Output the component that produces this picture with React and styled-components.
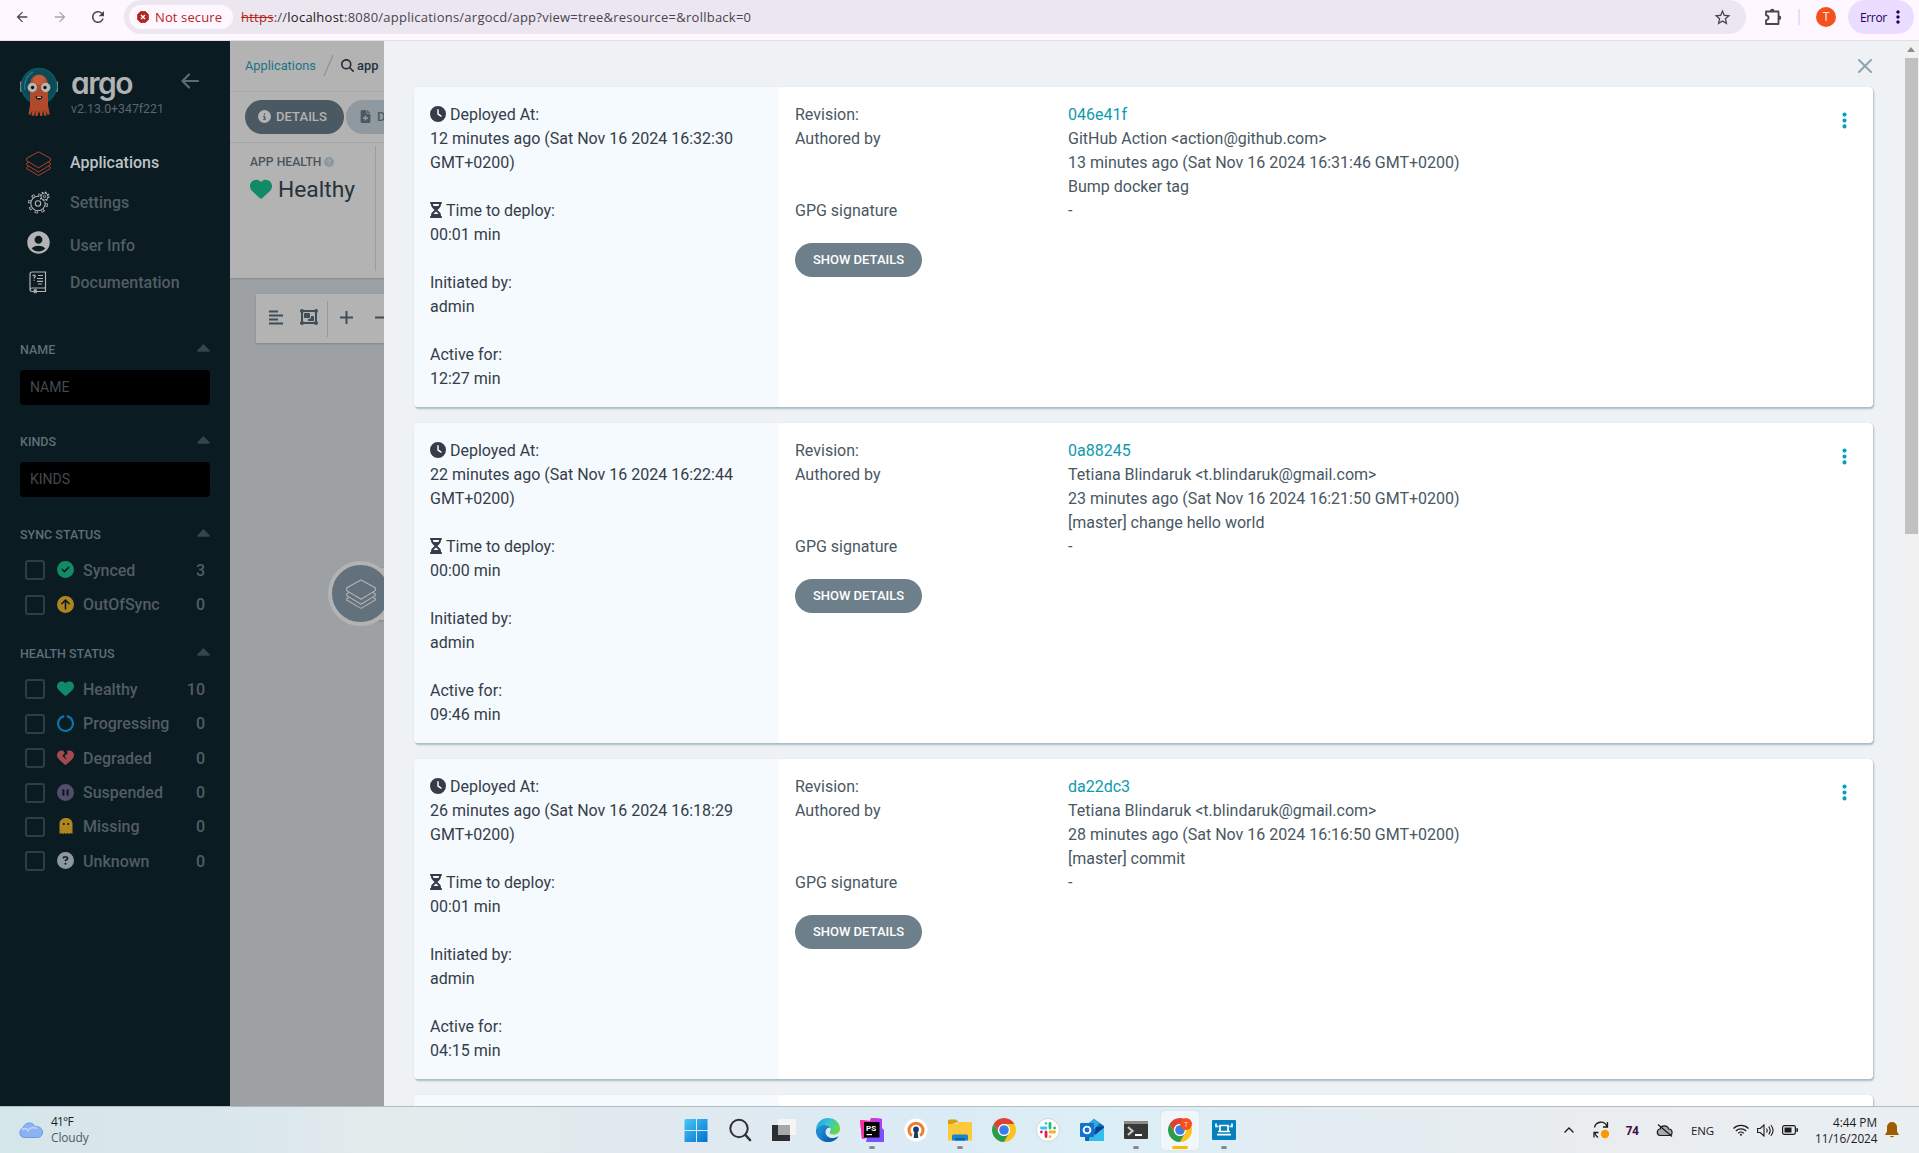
import React from 'react';
import styled, { createGlobalStyle } from 'styled-components';
import {
  FaClock, FaHourglassHalf, FaHeart, FaHeartCrack, FaCircleCheck, FaCircleArrowUp, FaCirclePause,
  FaCircleQuestion, FaCircleInfo, FaFileMedical, FaMagnifyingGlass, FaObjectGroup,
  FaCircleNotch, FaEllipsisVertical,
} from 'react-icons/fa6';
import { MdAccountCircle, MdArrowBack, MdArrowForward, MdRefresh, MdStarBorder, MdMoreVert } from 'react-icons/md';

const Global = createGlobalStyle`
  * { box-sizing: border-box; }
  body { margin: 0; overflow: hidden; font-family: Roboto, "Liberation Sans", sans-serif; }
  svg { display: block; flex: none; }
`;

const Screen = styled.div`
  width: 1919px;
  height: 1153px;
  display: flex;
  flex-direction: column;
  overflow: hidden;
`;

/* ---------- browser bar ---------- */
const BrowserBar = styled.header`
  height: 41px;
  flex: none;
  display: flex;
  align-items: flex-start;
  background: #fef7ff;
  border-bottom: 1px solid #e7dbe9;
  font-family: "Open Sans", "Noto Sans", sans-serif;
`;
const BarButton = styled.div`
  width: ${(p) => p.$w}px;
  height: 34px;
  display: flex;
  align-items: center;
  padding-left: ${(p) => p.$pad || 0}px;
  color: ${(p) => p.$color || '#4a4452'};
`;
const AddressBar = styled.div`
  width: 1622px;
  height: 34px;
  border-radius: 17px;
  background: #ece6f0;
  display: flex;
  align-items: center;
  padding: 0 14px 0 5px;
  color: #49454e;
`;
const SecurityChip = styled.div`
  width: 104px;
  height: 24px;
  border-radius: 12px;
  background: #fef7ff;
  display: flex;
  align-items: center;
  gap: 6px;
  padding-left: 8px;
  color: #b3261e;
  font-size: 13px;
  letter-spacing: 0.12px;
  white-space: nowrap;
`;
const Url = styled.div`
  flex: 1;
  padding-left: 8px;
  font-size: 13px;
  letter-spacing: 0.245px;
  white-space: nowrap;
  s { color: #b3261e; }
  b { color: #1d1b20; font-weight: 400; }
`;
const BarDivider = styled.div`
  width: 2px;
  height: 16px;
  margin: 9px 16px 0 16px;
  background: #eaddff;
`;
const Avatar = styled.div`
  width: 20px;
  height: 20px;
  border-radius: 50%;
  margin: 7px 12px 0 0;
  background: #f4511e;
  color: #fde3da;
  font: 12px/20px Roboto, sans-serif;
  text-align: center;
`;
const ErrorChip = styled.div`
  width: 66px;
  height: 34px;
  border-radius: 17px;
  background: #eaddff;
  color: #21005d;
  display: flex;
  align-items: center;
  padding-left: 12px;
  gap: 1px;
  font-size: 12px;
  letter-spacing: -0.35px;
`;

/* ---------- page ---------- */
const Page = styled.div`
  flex: 1;
  min-height: 0;
  display: flex;
  overflow: hidden;
`;
const Sidebar = styled.nav`
  width: 230px;
  flex: none;
  background: #0a1b22;
  color: #525d63;
  padding-top: 26px;
`;
const Brand = styled.div`
  height: 76px;
  padding-left: 19px;
  display: flex;
  gap: 12px;
`;
const BrandText = styled.div`
  width: 98px;
  display: flex;
  flex-direction: column;
  white-space: nowrap;
`;
const Wordmark = styled.div`
  height: 35px;
  font: 600 30px/32px Inter, "Open Sans", sans-serif;
  font-feature-settings: "cv11";
  letter-spacing: -1.5px;
  color: #b1b3b3;
`;
const Version = styled.div`
  font-size: 12.3px;
  line-height: 14px;
  color: #5a666c;
`;
const Collapse = styled.div`
  padding: 6px 0 0;
  color: #5f6a70;
`;
const NavItem = styled.div`
  height: ${(p) => p.$h}px;
  padding-left: 26px;
  display: flex;
  align-items: center;
  gap: 20px;
  font-size: 16px;
  font-weight: 500;
  color: ${(p) => (p.$active ? '#bfc3c4' : '#525d63')};
  span { padding: ${(p) => p.$drop || 0}px 0 ${(p) => (p.$active ? 2 : 0)}px; }
`;
const NavIcon = styled.div`
  width: 24px;
  display: flex;
  justify-content: center;
  color: #b3b3b3;
`;
const Filter = styled.section`
  padding: 0 20px;
  margin-top: ${(p) => p.$top}px;
`;
const FilterTitle = styled.div`
  height: 20px;
  display: flex;
  align-items: center;
  justify-content: space-between;
  margin-bottom: ${(p) => p.$gap}px;
  font-size: 12.5px;
  font-weight: 500;
  color: #5e7079;
  svg { margin-top: -3px; }
`;
const FilterInput = styled.div`
  height: 35px;
  border-radius: 4px;
  background: #000;
  padding-left: 10px;
  font-size: 14px;
  line-height: 35px;
  color: #42494f;
`;
const CheckRow = styled.div`
  height: 34.4px;
  display: flex;
  align-items: center;
  padding: 0 5px;
  font-size: 16px;
  font-weight: 500;
  color: #525d63;
  span { flex: 1; }
`;
const Box = styled.div`
  width: 20px;
  height: 20px;
  border: 2px solid #313d46;
  border-radius: 3px;
  margin-right: 12px;
`;
const StatusIcon = styled.div`
  width: 17px;
  margin: -1px 9px 0 0;
  display: flex;
  justify-content: center;
  color: ${(p) => p.$color};
`;

const Main = styled.main`
  width: 154px;
  flex: none;
  overflow: hidden;
  background: #9da1a4;
  white-space: nowrap;
`;
const Crumbs = styled.div`
  height: 51px;
  background: #b3b3b3;
  border-bottom: 1px solid #a6a8aa;
  padding: 0 0 2px 15px;
  display: flex;
  align-items: center;
  font-size: 12.8px;
  color: #1c7383;
  b { font-weight: 500; color: #26303a; }
`;
const Actions = styled.div`
  height: 51px;
  background: #b3b3b3;
  border-bottom: 1px solid #a6a8aa;
  padding: 8px 0 0 15px;
  display: flex;
  gap: 2px;
`;
const Pill = styled.div`
  width: 99px;
  height: 34px;
  flex: none;
  border-radius: 17px;
  background: ${(p) => p.$bg};
  color: ${(p) => p.$fg};
  display: flex;
  align-items: center;
  padding: 0 0 1px 13px;
  gap: 5px;
  font-size: 13.1px;
  font-weight: 500;
`;
const Status = styled.div`
  height: 135px;
  background: #b3b3b3;
  box-shadow: 0 1px 2px #81898f;
  padding: 3px 0 7px 20px;
  display: flex;
`;
const Health = styled.div`
  width: 126px;
  border-right: 1px solid #9a9da0;
  padding-top: 8px;
`;
const HealthLabel = styled.div`
  display: flex;
  align-items: center;
  gap: 3px;
  height: 16px;
  font-size: 12.2px;
  font-weight: 500;
  color: #49555e;
  svg { color: #8c979e; }
`;
const HealthValue = styled.div`
  display: flex;
  align-items: center;
  gap: 6px;
  height: 38px;
  font-size: 22.8px;
  color: #28323b;
  svg { color: #108a67; }
`;
const GraphBar = styled.div`
  height: 49px;
  margin: 16px 0 0 26px;
  background: #b3b3b3;
  box-shadow: 0 1px 2px #7c858b;
  display: flex;
  align-items: center;
  color: #404e58;
`;
const GraphGroup = styled.div`
  width: 72px;
  height: 36px;
  flex: none;
  display: flex;
  align-items: center;
  gap: ${(p) => (p.$last ? 22 : 17)}px;
  padding: 0 0 3px ${(p) => (p.$last ? 12 : 13)}px;
  border-right: ${(p) => (p.$last ? '0' : '1px solid #979a9c')};
`;
const Node = styled.div`
  margin: 218px 0 0 98px;
  display: flex;
  align-items: center;
  isolation: isolate;
`;
const NodeCircle = styled.div`
  width: 65px;
  height: 65px;
  flex: none;
  border-radius: 50%;
  border: 4px solid #b3b3b3;
  background: #62717b;
  display: flex;
  align-items: center;
  justify-content: center;
  color: #b3b3b3;
`;
const NodeCard = styled.div`
  width: 60px;
  height: 52px;
  flex: none;
  margin: 0 0 0 -20px;
  background: #b3b3b3;
  box-shadow: 0 1px 2px #7c858b;
  z-index: -1;
`;

/* ---------- history panel ---------- */
const Panel = styled.div`
  flex: 1;
  display: flex;
  background: #eef2f5;
  overflow: hidden;
`;
const PanelBody = styled.div`
  width: 1519px;
  padding: 0 30px 0 30px;
`;
const PanelTop = styled.div`
  height: 46px;
  display: flex;
  justify-content: flex-end;
  align-items: flex-start;
  padding: 18px 1px 0 0;
`;
const Card = styled.article`
  height: 320px;
  margin-bottom: 16px;
  display: flex;
  border-radius: 4px;
  overflow: hidden;
  background: #fff;
  box-shadow: 0 0 1px #b9c6ce, 1px 2px 2px #a9bac4;
  font-size: 16px;
  line-height: 24px;
`;
const Deployed = styled.div`
  width: 365px;
  flex: none;
  background: #f4fafd;
  padding: 16px;
  color: #363c4a;
  display: flex;
  flex-direction: column;
  gap: 24px;
  white-space: nowrap;
`;
const IconLine = styled.div`
  display: flex;
  align-items: center;
  gap: 4px;
  svg {
    width: ${(p) => p.$icon}px;
    height: 16px;
    margin-top: -2px;
  }
`;
const Revision = styled.div`
  flex: 1;
  padding: 16px;
  color: #495763;
`;
const Fields = styled.div`
  display: grid;
  grid-template-columns: 273px 1fr;
  margin-bottom: 20px;
`;
const Link = styled.a`
  color: #0e9aae;
`;
const DetailsButton = styled.button`
  width: 127px;
  height: 34px;
  border: 0;
  padding: 0;
  border-radius: 17px;
  background: #6d7f8b;
  color: #fff;
  font: 500 13px/34px Roboto, sans-serif;
`;
const Kebab = styled.div`
  width: 56px;
  padding: 24px 0 0 18px;
  color: #00a2b3;
`;
const ScrollTrack = styled.div`
  width: 16px;
  background: #f1f1f1;
  display: flex;
  flex-direction: column;
  align-items: center;
  padding-top: 6px;
`;
const ScrollThumb = styled.div`
  width: 13px;
  height: 476px;
  margin-top: 6px;
  background: #c1c1c1;
`;

/* ---------- taskbar ---------- */
const Taskbar = styled.footer`
  height: 47px;
  flex: none;
  display: grid;
  grid-template-columns: 674px 572px 1fr;
  border-top: 1px solid #b4bcc1;
  background: linear-gradient(90deg, #d5e6ea 0%, #dae7ed 13%, #e4ebec 20%, #e0e9f0 37%, #dbebf5 48%, #dceef6 58%, #e2ecf2 68%, #e9edf0 82%, #e9eef2 100%);
  font-family: "Open Sans", "Noto Sans", sans-serif;
`;
const Weather = styled.div`
  display: flex;
  align-items: center;
  padding-left: 18px;
  gap: 8px;
  font-size: 12px;
  line-height: 16px;
  letter-spacing: -0.8px;
  color: #1b1f22;
  small { display: block; font-size: 12px; letter-spacing: -0.15px; color: #545c61; }
`;
const Apps = styled.div`
  display: flex;
`;
const AppSlot = styled.div`
  width: 44px;
  height: 46px;
  display: flex;
  flex-direction: column;
  align-items: center;
  padding: 4px 3px 2px;
`;
const Tile = styled.div`
  width: 38px;
  height: 39px;
  border-radius: 4px;
  display: flex;
  flex-direction: column;
  align-items: center;
  padding-top: 7px;
  background: ${(p) => (p.$active ? '#f1f6fa' : 'transparent')};
  box-shadow: ${(p) => (p.$active ? '0 0 1px #b8c6cf' : 'none')};
`;
const Mark = styled.div`
  width: ${(p) => (p.$active ? 16 : 6)}px;
  height: 3px;
  margin-top: 4px;
  border-radius: 2px;
  background: ${(p) => (p.$active ? '#fdb900' : '#858c90')};
`;
const Tray = styled.div`
  display: flex;
  align-items: center;
  justify-content: flex-end;
  padding-right: 20px;
  font-size: 11.5px;
  color: #1b1b1b;
`;
const TrayItem = styled.div`
  margin-right: ${(p) => p.$r}px;
  white-space: nowrap;
  color: ${(p) => p.$color || 'inherit'};
  font-weight: ${(p) => (p.$bold ? 700 : 400)};
  letter-spacing: ${(p) => p.$ls || 0}px;
`;
const Clock = styled.div`
  margin-right: 8px;
  width: 62px;
  text-align: right;
  white-space: nowrap;
  line-height: 16px;
  font-size: 11.8px;
`;

/* ---------- drawings ---------- */
const Layers = ({ size, color, sw }) => (
  <svg width={size} height={size} viewBox="0 0 24 24" fill="none" stroke={color} strokeWidth={sw} strokeLinejoin="round">
    <path d="M12 .8 23.4 7v2.3L12 16.2.6 9.300V7z" />
    <path d="M2.500 10.800.6 12v1.300L12 20.200l11.400-6.900V12l-1.900-1.200" />
    <path d="M2.500 14.600.6 15.800v1L12 23.500l11.400-6.700v-1l-1.900-1.200" />
  </svg>
);

const Gears = () => (
  <svg width="23" height="23" viewBox="0 0 23 23" fill="none" stroke="currentColor">
    <circle cx="11" cy="12.500" r="8.900" strokeWidth="2.400" strokeDasharray="3.300 3.690" />
    <circle cx="11" cy="12.500" r="8.400" stroke="#0a1b22" strokeWidth="1.700" strokeDasharray="1.500 5.100" strokeDashoffset="-.9" />
    <circle cx="11" cy="12.500" r="7.200" strokeWidth="1.100" />
    <circle cx="11" cy="12.500" r="2.700" strokeWidth="1.100" />
    <circle cx="17.500" cy="5.500" r="4.900" fill="#0a1b22" stroke="#0a1b22" />
    <circle cx="17.500" cy="5.500" r="3.500" strokeWidth="1" />
    <circle cx="17.500" cy="5.500" r="4.400" strokeWidth="1.200" strokeDasharray="1.600 1.860" />
    <circle cx="17.500" cy="5.500" r="1.200" strokeWidth=".9" />
  </svg>
);

const Book = () => (
  <svg width="18" height="23" viewBox="0 0 18 23" fill="none" stroke="currentColor" strokeWidth="1.200">
    <path d="M3 1h13.500v19.500H3a2 2 0 0 1-2-2V3a2 2 0 0 1 2-2zM1.200 18.500Q1.500 17 3 17h13.500" />
    <path d="M9 4.500h5M8 7.500h6M8 10.300h6M9 13h4" />
    <path d="M4 5.200c0-1.600 2.300-1.500 2.300 0 0 1-1.200 1.100-1.200 2.300M5.100 8.800v1" />
    <path d="M5 18.500v3.800l1.200-1 1.300 1v-3.800z" fill="currentColor" strokeWidth=".5" />
  </svg>
);

const Squid = () => (
  <svg width="40" height="50" viewBox="0 0 40 50">
    <rect x="1" y="14" width="38" height="11" rx="1.500" fill="#7d8f9b" />
    <circle cx="20" cy="19" r="18.300" fill="#0b5560" />
    <circle cx="20" cy="19" r="16.300" fill="#0c4b55" />
    <path d="M6 23C4.500 15 8 8 14 5" fill="none" stroke="#2f7580" strokeWidth="1.200" />
    <path d="M11 17a9 9.500 0 0 1 18 0v21l1.800 9.500h-2.600l-1.400-4 .6 5.300h-2.200L24 43l-.7 6h-2.100L20 43.500 18.600 49h-2.200l.2-6-1.500 5.800h-2.500l.8-5.800-1.700 4.500H9.500L11 38z" fill="#b1492c" />
    <ellipse cx="20" cy="13" rx="6" ry="5" fill="#c05b3b" />
    <circle cx="13.300" cy="20.500" r="4.700" fill="#b5b7b7" />
    <circle cx="26.700" cy="20.500" r="4.700" fill="#b5b7b7" />
    <circle cx="13.600" cy="20.500" r="1.700" fill="#111" />
    <circle cx="26" cy="20.500" r="1.700" fill="#111" />
    <path d="M16.500 29c2 1 5 1 7 0-.5 5-6.500 5-7 0z" fill="#111" />
    <path d="M18 29.700h4v1.300h-4z" fill="#bbb" />
  </svg>
);

const Ghost = () => (
  <svg width="14" height="16" viewBox="0 0 14 16">
    <path d="M.5 16V6c0-8 13-8 13 0v10l-1.500-1L10.300 16l-1.800-1L7 16l-1.500-1L3.800 16 2 15zM4 5v2h1.600V5zM8.400 5v2H10V5z" fill="currentColor" fillRule="evenodd" />
  </svg>
);

const Caret = () => (
  <svg width="13" height="8" viewBox="0 0 13 8"><path d="M6.500 0 12.800 6.500q.2 1.300-1 1.300H1.200Q0 7.800.2 6.500z" fill="#38434b" /></svg>
);

const Puzzle = () => (
  <svg width="18" height="18" viewBox="0 0 18 18">
    <path d="M2 3.500h12.500v12.500H2v-3.700q2.600-.7 2.600-2.500T2 7.200z" fill="none" stroke="currentColor" strokeWidth="1.800" strokeLinejoin="round" />
    <path d="M6 3a2.200 2.200 0 0 1 4.400 0zM15 7.500a2.200 2.200 0 0 1 0 4.400z" fill="currentColor" />
  </svg>
);

const Chrome = ({ badge }) => (
  <svg width="24" height="24" viewBox="0 0 24 24">
    <path d="M12 6h10.390A12 12 0 0 0 1.610 6L6.800 15A6 6 0 0 1 12 6z" fill="#e0402f" />
    <path d="M12 6h10.390A12 12 0 0 0 1.610 6L6.800 15A6 6 0 0 1 12 6z" fill="#fcc31e" transform="rotate(120 12 12)" />
    <path d="M12 6h10.390A12 12 0 0 0 1.610 6L6.800 15A6 6 0 0 1 12 6z" fill="#2c9c48" transform="rotate(240 12 12)" />
    <circle cx="12" cy="12" r="6" fill="#fff" />
    <circle cx="12" cy="12" r="4.800" fill="#3a7de8" />
    {badge && <circle cx="18" cy="6" r="6" fill="#f4511e" />}
    {badge && <text x="18" y="8.500" fontSize="7" fill="#fbd5c8" textAnchor="middle" fontFamily="Roboto">T</text>}
  </svg>
);

const Windows = () => (
  <svg width="24" height="24" viewBox="0 0 24 24">
    <defs><linearGradient id="win" x1="0" y1="0" x2="1" y2="1"><stop offset="0" stopColor="#48c8f8" /><stop offset="1" stopColor="#0071cf" /></linearGradient></defs>
    <path d="M1.500 1H12v11H.5V2zM13 1h10.500v11H13zM.5 13H12v11H.5zM13 13h10.500v11H13z" fill="url(#win)" />
  </svg>
);
const SearchGlyph = () => (
  <svg width="24" height="24" viewBox="0 0 24 24" fill="none" stroke="#2f3133" strokeLinecap="round">
    <circle cx="11" cy="10.500" r="8.700" strokeWidth="2" fill="#dfe7ec" /><path d="m17.500 17 4.500 5" strokeWidth="2.600" />
  </svg>
);
const TaskView = () => (
  <svg width="24" height="24" viewBox="0 0 24 24">
    <path d="M0 7h18v16H0z" fill="#2c2d2e" /><path d="M6 1h18v16H6z" fill="#f5f5f5" /><path d="M6 7h12v10H6z" fill="#a6a8aa" />
  </svg>
);
const Edge = () => (
  <svg width="24" height="24" viewBox="0 0 24 24">
    <defs>
      <linearGradient id="edgeTop" x1="0" y1="0" x2="1" y2=".4"><stop offset="0" stopColor="#1f9be0" /><stop offset=".5" stopColor="#35c1d8" /><stop offset="1" stopColor="#62d84e" /></linearGradient>
      <linearGradient id="edgeLow" x1="0" y1="0" x2="1" y2="1"><stop offset="0" stopColor="#1b9fe0" /><stop offset="1" stopColor="#0c4c9c" /></linearGradient>
    </defs>
    <path d="M0 11C1 4 6 0 12 0c7 0 12 5 12 10.500 0 4-3 6-6.500 6-2.500 0-4-1-4-2 0-.8 1.200-1.300 1.200-3C14.700 9 12 7 8.500 7 4.500 7 1.500 8.500 0 11z" fill="url(#edgeTop)" />
    <path d="M0 12C1 9 4.500 7 8.500 7c2.500 0 5 1 5.800 3C12 9 9.500 11 9.500 14c0 4 4 6.500 8 6 2-.3 3.500-1 5-2C20.500 22 16.500 24 12 24 5 24-.5 18.500 0 12z" fill="url(#edgeLow)" />
    <path d="M8.500 7C4 7 .5 9 0 12c-.3 5 3 10 8 11.500C4 20 4 12 8.500 7z" fill="#1d8fd8" opacity=".6" />
  </svg>
);
const PhpStorm = () => (
  <svg width="24" height="24" viewBox="0 0 24 24">
    <path d="m0 2 10 1 1-3 11 1v9l2 2v12H6l1-4-5 1z" fill="#7b52ff" /><path d="m0 2 10 1 1-3 11 1-1 9H7v8l-5 3z" fill="#ff2d9a" /><path d="m12 0 10 1v8h-9z" fill="#b83bf0" />
    <path d="M4 4h15.500v15.500H4z" fill="#000" />
    <text x="6" y="12.500" fontSize="8" fontWeight="700" fontFamily="Roboto" fill="#fff">PS</text>
    <path d="M6.500 16h5.500v1.200H6.500z" fill="#fff" />
  </svg>
);
const Vpn = () => (
  <svg width="24" height="24" viewBox="0 0 24 24">
    <circle cx="12" cy="12" r="11.500" fill="#fff" />
    <path d="M7.800 17.800a7 7 0 1 1 8.400 0" fill="none" stroke="#ea7e2a" strokeWidth="3" />
    <circle cx="12" cy="11.500" r="2.900" fill="#1b3a6b" /><path d="M10.500 12h3l.8 8H9.700z" fill="#1b3a6b" />
  </svg>
);
const Folder = () => (
  <svg width="24" height="24" viewBox="0 0 24 24">
    <path d="M0 3q0-1.500 1.500-1.500H8l3 3h-3L0 8z" fill="#dc9c0f" /><path d="M0 6h9l2.500-2H24v18.500H0z" fill="#fcc93b" />
    <path d="M4 22.500V18q0-1.500 1.500-1.500h13q1.500 0 1.500 1.500v4.500z" fill="#1485d0" /><path d="M7 20h10v2.500H7z" fill="#0b62a8" />
  </svg>
);
const Slack = () => (
  <svg width="24" height="24" viewBox="0 0 24 24" strokeWidth="2.800" strokeLinecap="round">
    <circle cx="12" cy="12" r="11.500" fill="#fff" stroke="#cfd4d6" strokeWidth="1" />
    <path d="M10 5.400v.01M5.400 10H10" stroke="#36c5f0" /><path d="M14 5.400V10M18.600 10v.01" stroke="#2eb67d" />
    <path d="M14 14h4.600M14 18.600v.01" stroke="#ecb22e" /><path d="M10 14v4.600M5.400 14v.01" stroke="#e01e5a" />
  </svg>
);
const Outlook = () => (
  <svg width="24" height="24" viewBox="0 0 24 24">
    <path d="M5 8 14 1l10 7v14q0 1-1 1H6q-1 0-1-1z" fill="#1066b5" /><path d="m8 6 6-5 6 4-8 9z" fill="#32a8e0" /><path d="m24 10-15 10v3h14q1 0 1-1z" fill="#35bdf0" /><path d="M16 9h8l-9 8z" fill="#0c3f85" />
    <rect y="5" width="14" height="14" rx="1" fill="#1273cf" /><circle cx="7" cy="12" r="3.400" fill="none" stroke="#fff" strokeWidth="1.900" />
  </svg>
);
const Terminal = () => (
  <svg width="24" height="24" viewBox="0 0 24 24">
    <rect y="3" width="24" height="18" rx="1" fill="#383838" /><path d="M0 3h24v3H0z" fill="#8a8a8a" />
    <path d="m4 9 4.500 4L4 17" fill="none" stroke="#c8c8c8" strokeWidth="2.200" /><path d="M11 16h7v2h-7z" fill="#fff" />
  </svg>
);
const Phone = () => (
  <svg width="24" height="24" viewBox="0 0 24 24">
    <rect y="2" width="24" height="20" rx="1" fill="#0380bd" />
    <path d="M4 5.500v3h2.500M20 5.500v3h-2.500M8 13.500V7.500h8v6zM5 16.700h14M6 13.500h12" fill="none" stroke="#fff" strokeWidth="1.700" />
  </svg>
);
const Cloud = () => (
  <svg width="25" height="17" viewBox="0 0 25 17">
    <path d="M5.500 15.500a5 5 0 0 1-.5-9.500C6.500 0 14.500-1 17 4.500c4-.5 7.500 2 7.500 5.700 0 3-2 5.300-5 5.300z" fill="#8cb2f2" stroke="#6f98e4" />
    <path d="M4 7.500c3-1.500 5-.5 6 1 2-3 6-4 9-2" fill="none" stroke="#b8d2fb" strokeWidth="2" />
  </svg>
);

const apps = [
  [Windows], [SearchGlyph], [TaskView], [Edge], [PhpStorm, true], [Vpn], [Folder, true],
  [Chrome], [Slack], [Outlook], [Terminal, true], [() => <Chrome badge />, true, true], [Phone, true],
];

const deployments = [
  { at: ['12 minutes ago (Sat Nov 16 2024 16:32:30', 'GMT+0200)'], took: '00:01 min', active: '12:27 min', rev: '046e41f', author: 'GitHub Action <action@github.com>', when: '13 minutes ago (Sat Nov 16 2024 16:31:46 GMT+0200)', msg: 'Bump docker tag' },
  { at: ['22 minutes ago (Sat Nov 16 2024 16:22:44', 'GMT+0200)'], took: '00:00 min', active: '09:46 min', rev: '0a88245', author: 'Tetiana Blindaruk <t.blindaruk@gmail.com>', when: '23 minutes ago (Sat Nov 16 2024 16:21:50 GMT+0200)', msg: '[master] change hello world' },
  { at: ['26 minutes ago (Sat Nov 16 2024 16:18:29', 'GMT+0200)'], took: '00:01 min', active: '04:15 min', rev: 'da22dc3', author: 'Tetiana Blindaruk <t.blindaruk@gmail.com>', when: '28 minutes ago (Sat Nov 16 2024 16:16:50 GMT+0200)', msg: '[master] commit' },
];

const syncRows = [
  ['Synced', 3, <FaCircleCheck size={17} />, '#128a68'],
  ['OutOfSync', 0, <FaCircleArrowUp size={17} />, '#ae861d'],
];
const healthRows = [
  ['Healthy', 10, <FaHeart size={17} />, '#128a68'],
  ['Progressing', 0, <FaCircleNotch size={17} />, '#0a76a8'],
  ['Degraded', 0, <FaHeartCrack size={17} />, '#a34a50'],
  ['Suspended', 0, <FaCirclePause size={17} />, '#524d6b'],
  ['Missing', 0, <Ghost />, '#ae861d'],
  ['Unknown', 0, <FaCircleQuestion size={17} />, '#8d979e'],
];

const Checks = ({ rows }) => rows.map(([label, count, icon, color]) => (
  <CheckRow key={label}>
    <Box />
    <StatusIcon $color={color}>{icon}</StatusIcon>
    <span>{label}</span>
    {count}
  </CheckRow>
));

const Deployment = ({ d }) => (
  <Card>
    <Deployed>
      <div>
        <IconLine $icon={16}><FaClock />Deployed At:</IconLine>
        {d.at.map((line) => <div key={line}>{line}</div>)}
      </div>
      <div>
        <IconLine $icon={12}><FaHourglassHalf />Time to deploy:</IconLine>
        {d.took}
      </div>
      <div>Initiated by:<br />admin</div>
      <div>Active for:<br />{d.active}</div>
    </Deployed>
    <Revision>
      <Fields>
        <div>Revision:</div><Link>{d.rev}</Link>
        <div>Authored by</div><div>{d.author}<br />{d.when}<br />{d.msg}</div>
        <div>GPG signature</div><div>-</div>
      </Fields>
      <DetailsButton>SHOW DETAILS</DetailsButton>
    </Revision>
    <Kebab><FaEllipsisVertical size={19} /></Kebab>
  </Card>
);

export default function App() {
  return (
    <Screen>
      <Global />
      <BrowserBar>
        <BarButton $w={52} $pad={14}><MdArrowBack size={16} /></BarButton>
        <BarButton $w={37} $pad={0} $color="#aaa5b0"><MdArrowForward size={16} /></BarButton>
        <BarButton $w={35} $pad={0}><MdRefresh size={18} /></BarButton>
        <AddressBar>
          <SecurityChip>
            <svg width="12" height="12" viewBox="0 0 12 12"><path d="M3.700.3h4.600l3.400 3.400v4.600l-3.400 3.400H3.700L.3 8.300V3.700z" fill="#b3261e" stroke="#b3261e" strokeLinejoin="round" strokeWidth=".6" /><path d="m4 4 4 4m0-4L4 8" stroke="#fff" strokeWidth="1.400" /></svg>
            Not secure
          </SecurityChip>
          <Url><s>https</s>://<b>localhost</b>:8080/applications/argocd/app?view=tree&amp;resource=&amp;rollback=0</Url>
          <MdStarBorder size={19} />
        </AddressBar>
        <BarButton $w={36} $pad={18}><Puzzle /></BarButton>
        <BarDivider />
        <Avatar>T</Avatar>
        <ErrorChip>Error<MdMoreVert size={20} /></ErrorChip>
      </BrowserBar>

      <Page>
        <Sidebar>
          <Brand>
            <Squid />
            <BrandText>
              <Wordmark>argo</Wordmark>
              <Version>v2.13.0+347f221</Version>
            </BrandText>
            <Collapse>
              <svg width="18" height="16" viewBox="0 0 18 16" fill="none" stroke="currentColor" strokeWidth="2.200" strokeLinecap="round" strokeLinejoin="round"><path d="M17 8H2M8 1.500 1.500 8 8 14.500" /></svg>
            </Collapse>
          </Brand>
          <NavItem $h={40} $active><NavIcon><Layers size={25} color="#b2432c" sw={0.95} /></NavIcon><span>Applications</span></NavItem>
          <NavItem $h={39}><NavIcon><Gears /></NavIcon><span>Settings</span></NavItem>
          <NavItem $h={41} $drop={5}><NavIcon><MdAccountCircle size={27} /></NavIcon><span>User Info</span></NavItem>
          <NavItem $h={39}><NavIcon><Book /></NavIcon><span>Documentation</span></NavItem>

          <Filter $top={37}><FilterTitle $gap={11}>NAME<Caret /></FilterTitle><FilterInput>NAME</FilterInput></Filter>
          <Filter $top={26}><FilterTitle $gap={11}>KINDS<Caret /></FilterTitle><FilterInput>KINDS</FilterInput></Filter>
          <Filter $top={27}><FilterTitle $gap={9}>SYNC STATUS<Caret /></FilterTitle><Checks rows={syncRows} /></Filter>
          <Filter $top={21.4}><FilterTitle $gap={9}>HEALTH STATUS<Caret /></FilterTitle><Checks rows={healthRows} /></Filter>
        </Sidebar>

        <Main>
          <Crumbs>
            Applications
            <svg width="25" height="24" viewBox="0 0 25 24"><path d="m8 23 9-21" stroke="#8d9498" strokeWidth="1.200" /></svg>
            <FaMagnifyingGlass size={13} color="#26303a" />
            <b>&nbsp;app</b>
          </Crumbs>
          <Actions>
            <Pill $bg="#4b5963" $fg="#b3b3b3"><FaCircleInfo size={13} />DETAILS</Pill>
            <Pill $bg="#8f999f" $fg="#4b5963"><FaFileMedical size={13} />DIFF</Pill>
          </Actions>
          <Status>
            <Health>
              <HealthLabel>APP HEALTH<FaCircleQuestion size={10} /></HealthLabel>
              <HealthValue><FaHeart size={22} />Healthy</HealthValue>
            </Health>
          </Status>
          <GraphBar>
            <GraphGroup>
              <svg width="14" height="15" viewBox="0 0 14 15" stroke="currentColor" strokeWidth="2"><path d="M0 1.500h9M0 5.500h14M0 9.500h9M0 13.500h14" /></svg>
              <FaObjectGroup size={18} />
            </GraphGroup>
            <GraphGroup $last>
              <svg width="13" height="13" viewBox="0 0 13 13" stroke="currentColor" strokeWidth="2"><path d="M0 6.500h13M6.500 0v13" /></svg>
              <svg width="13" height="13" viewBox="0 0 13 13" stroke="currentColor" strokeWidth="2"><path d="M0 6.500h13" /></svg>
            </GraphGroup>
          </GraphBar>
          <Node>
            <NodeCircle><Layers size={30} color="#b3b3b3" sw={0.9} /></NodeCircle>
            <NodeCard />
          </Node>
        </Main>

        <Panel>
          <PanelBody>
            <PanelTop>
              <svg width="14" height="14" viewBox="0 0 14 14" stroke="#8fa4b1" strokeWidth="2" strokeLinecap="round"><path d="m1 1 12 12M13 1 1 13" /></svg>
            </PanelTop>
            {deployments.map((d) => <Deployment key={d.rev} d={d} />)}
            <Card><Deployed /><Revision /></Card>
          </PanelBody>
          <ScrollTrack>
            <svg width="8" height="5" viewBox="0 0 8 5"><path d="M4 0 8 5H0z" fill="#8e8e8e" /></svg>
            <ScrollThumb />
          </ScrollTrack>
        </Panel>
      </Page>

      <Taskbar>
        <Weather><Cloud /><div>41°F<small>Cloudy</small></div></Weather>
        <Apps>
          {apps.map(([Icon, open, active], i) => (
            <AppSlot key={i}>
              <Tile $active={active}><Icon />{open && <Mark $active={active} />}</Tile>
            </AppSlot>
          ))}
        </Apps>
        <Tray>
          <TrayItem $r={19}><svg width="10" height="6" viewBox="0 0 10 6" fill="none" stroke="currentColor" strokeWidth="1.300"><path d="m.5 5.500 4.500-4.500 4.500 4.500" /></svg></TrayItem>
          <TrayItem $r={16}>
            <svg width="17" height="18" viewBox="0 0 17 18" fill="none" stroke="currentColor" strokeWidth="1.300">
              <path d="M1.500 6.500a6.500 6.500 0 0 1 12.500-1M14.500 1v5H10M5 16.500A7 7 0 0 1 2 12M1 16.500v-5h4.500" /><circle cx="12" cy="13" r="4.200" fill="#ff9800" stroke="none" />
            </svg>
          </TrayItem>
          <TrayItem $r={17} $color="#4a0d4c" $bold>74</TrayItem>
          <TrayItem $r={18}>
            <svg width="17" height="13" viewBox="0 0 17 13" fill="none" stroke="currentColor" strokeWidth="1.200">
              <path d="M4 11.500a3.300 3.300 0 0 1 0-6.500c1-4 7.500-4.500 8.700 0 4.500 0 4.500 6.500 0 6.500z" fill="#a8abad" /><path d="m2 .5 14 12" />
            </svg>
          </TrayItem>
          <TrayItem $r={19} $ls={-0.1}>ENG</TrayItem>
          <TrayItem $r={8}>
            <svg width="16" height="12" viewBox="0 0 16 12" fill="none" stroke="currentColor" strokeWidth="1.100">
              <path d="M.5 4.500a10.500 10.500 0 0 1 15 0M2.800 7a7.500 7.500 0 0 1 10.400 0M5.200 9.300a4 4 0 0 1 5.600 0" /><circle cx="8" cy="10.800" r="1" fill="currentColor" stroke="none" />
            </svg>
          </TrayItem>
          <TrayItem $r={8}>
            <svg width="17" height="13" viewBox="0 0 17 13" fill="none" stroke="currentColor" strokeWidth="1.100">
              <path d="M.6 4.500h2.600L7 1v11L3.200 8.500H.6zM9.500 4.500q1.400 2 0 4M11.700 2.700q3 3.800 0 7.600M13.800 1q4.500 5.500 0 11" />
            </svg>
          </TrayItem>
          <TrayItem $r={17}>
            <svg width="16" height="10" viewBox="0 0 16 10" fill="none" stroke="currentColor" strokeWidth="1.200">
              <rect x=".6" y=".6" width="12.800" height="8.800" rx="1.800" /><path d="M2.500 2.500h7v5h-7z" fill="currentColor" stroke="none" /><path d="M15.200 3.200v3.600" strokeWidth="1.600" />
            </svg>
          </TrayItem>
          <Clock>4:44 PM<br />11/16/2024</Clock>
          <svg width="14" height="16" viewBox="0 0 14 16" fill="#a05a00"><path d="M7 0a5 5 0 0 1 5 5v4.500l2 3.500H0l2-3.500V5a5 5 0 0 1 5-5zM4.800 14h4.400q-2.200 2.500-4.400 0z" /></svg>
        </Tray>
      </Taskbar>
    </Screen>
  );
}
